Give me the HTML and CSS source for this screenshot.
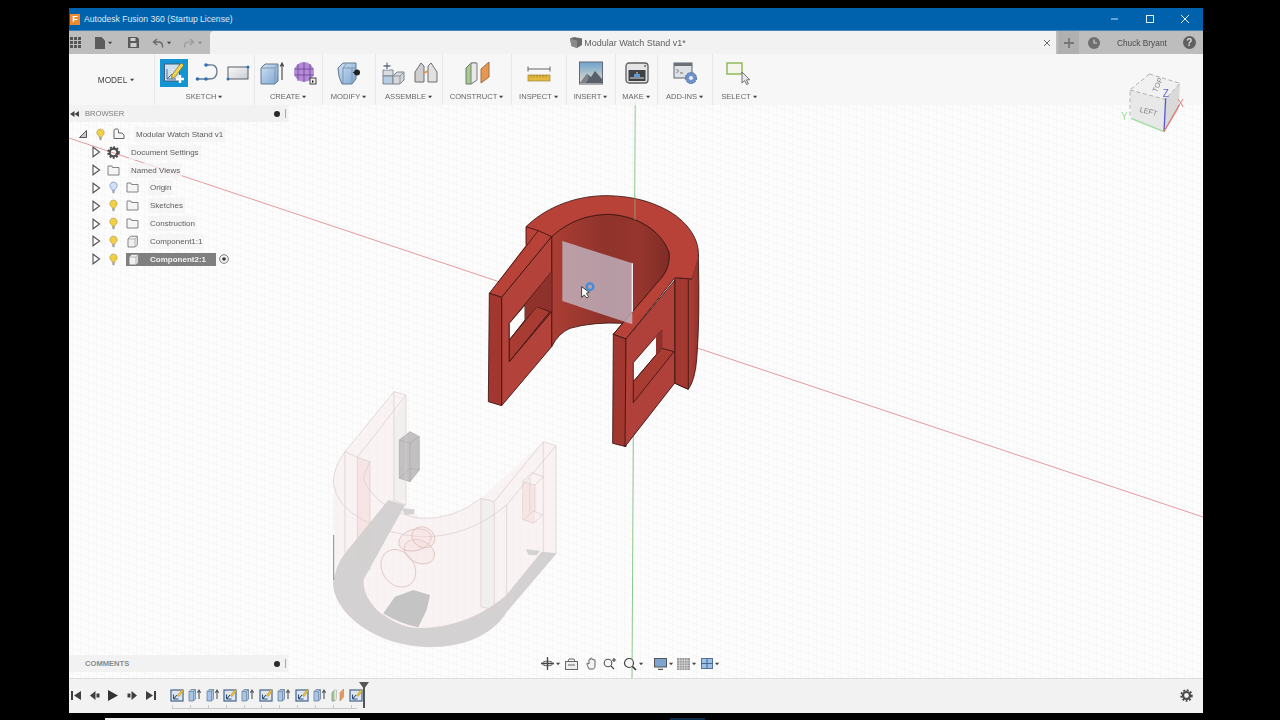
FILE: index.html
```html
<!DOCTYPE html>
<html lang="en">
<head>
<meta charset="utf-8">
<title>Autodesk Fusion 360</title>
<link rel="stylesheet" href="styles.css">
</head>
<body>
<svg class="defs" width="0" height="0" aria-hidden="true">
  <defs>
    <symbol id="bulb" viewBox="0 0 12 14"><path d="M6 1a4 4 0 0 0-2.400 7.200c.6.6.8 1.200.9 1.800h3c.1-.6.3-1.200.9-1.800A4 4 0 0 0 6 1z" fill="#f4cf45" stroke="#a89a55" stroke-width=".7"/><path d="M4.600 11h2.800M5 12.600h2" stroke="#777" stroke-width="1"/></symbol>
    <symbol id="bulb-off" viewBox="0 0 12 14"><path d="M6 1a4 4 0 0 0-2.400 7.200c.6.6.8 1.200.9 1.800h3c.1-.6.3-1.200.9-1.800A4 4 0 0 0 6 1z" fill="#cfe0f8" stroke="#6f8fc4" stroke-width=".8"/><path d="M4.600 11h2.800M5 12.600h2" stroke="#777" stroke-width="1"/></symbol>
    <symbol id="tri" viewBox="0 0 10 12"><path d="M2 1.200v9.600L8.600 6z" fill="#fafafa" stroke="#555" stroke-width="1.100"/></symbol>
    <symbol id="folder" viewBox="0 0 13 11"><path d="M1 2.500V10h11V2.500H5.500L5 1H1z" fill="#f5f5f5" stroke="#777" stroke-width=".9"/></symbol>
    <symbol id="comp" viewBox="0 0 12 13"><path d="M1.500 4L4 1.200h6.800V10L8.400 12H1.500z" fill="#f0f0f0" stroke="#777" stroke-width=".9"/><path d="M1.500 4h7v8M8.500 4l2.300-2.800" fill="none" stroke="#999" stroke-width=".7"/></symbol>
    <symbol id="sk" viewBox="0 0 14 14"><rect x="1" y="2" width="12" height="11" fill="#dfe6f0" stroke="#42648c" stroke-width="1.200"/><path d="M3.500 11L7 7M3.500 11h5M3.500 11V6.500" fill="none" stroke="#2f4f78" stroke-width="1.100"/><path d="M7.500 7.500L12 1.500l1.500 1.200-4.400 5.800z" fill="#f3c432" stroke="#9a8430" stroke-width=".5"/></symbol>
    <symbol id="ext" viewBox="0 0 14 14"><path d="M1 3.500L3 1.500h4.500V11L5.500 13H1z" fill="#a9c6e6" stroke="#6a829c" stroke-width=".8"/><path d="M1 3.500h4.500V13M5.500 3.500l2-2" fill="none" stroke="#6a829c" stroke-width=".7"/><path d="M11 11V3M9.300 4.700L11 2l1.700 2.700" fill="none" stroke="#555" stroke-width="1.100"/></symbol>
    <symbol id="con" viewBox="0 0 14 14"><path d="M1 5l2.500-3h2v8.500L3.500 13H1z" fill="#a4c98f" stroke="#777" stroke-width=".6"/><path d="M3.500 2h2v8.500l-2 2.500z" fill="#e9e9e9"/><path d="M9 10V4.500L12.500 1v8L9 13z" fill="#e69a5f" stroke="#a9764e" stroke-width=".5"/></symbol>
    <symbol id="caret" viewBox="0 0 6 4"><path d="M0 .5h5L2.500 3.500z" fill="#444"/></symbol>
    <pattern id="grid" width="8" height="8" patternUnits="userSpaceOnUse" patternTransform="skewY(18.400)"><path d="M8 0H0V8" fill="none" stroke="#eeeeef" stroke-width=".8"/></pattern>
    <linearGradient id="wall" x1="0" x2="1" y1="0" y2="0"><stop offset="0" stop-color="#ab3e34"/><stop offset=".45" stop-color="#8f332b"/><stop offset=".75" stop-color="#96352d"/><stop offset="1" stop-color="#7f2c26"/></linearGradient>
    <linearGradient id="side" x1="0" x2="1" y1="0" y2="0"><stop offset="0" stop-color="#b5443a"/><stop offset=".6" stop-color="#ad3e35"/><stop offset="1" stop-color="#93332c"/></linearGradient>
    <linearGradient id="plain" x1="0" x2="1" y1="0" y2="1"><stop offset="0" stop-color="#fbfbfb"/><stop offset="1" stop-color="#c9ccd2"/></linearGradient>
    <linearGradient id="blue" x1="0" x2="1" y1="0" y2="1"><stop offset="0" stop-color="#cfe0f2"/><stop offset="1" stop-color="#7ea7d4"/></linearGradient>
    <linearGradient id="sky" x1="0" x2="0" y1="0" y2="1"><stop offset="0" stop-color="#6ea4cf"/><stop offset="1" stop-color="#e9dcc8"/></linearGradient>
  </defs>
</svg>

<div class="app">
  <header class="titlebar">
    <span class="logo">F</span>
    <span class="title">Autodesk Fusion 360 (Startup License)</span>
    <div class="winctl">
      <svg width="10" height="10" viewBox="0 0 10 10"><path d="M1 5h7" stroke="#cfe2f2" stroke-width="1"/></svg>
      <svg width="10" height="10" viewBox="0 0 10 10"><rect x="1.500" y="1.500" width="7" height="7" fill="none" stroke="#e4eef7" stroke-width="1"/></svg>
      <svg width="10" height="10" viewBox="0 0 10 10"><path d="M1 1l8 8M9 1l-8 8" stroke="#eef4fa" stroke-width="1"/></svg>
    </div>
  </header>

  <div class="tabbar">
    <div class="quick">
      <svg class="q-grid" width="11" height="11" viewBox="0 0 11 11"><path d="M0 0h3v3H0zM4 0h3v3H4zM8 0h3v3H8zM0 4h3v3H0zM4 4h3v3H4zM8 4h3v3H8zM0 8h3v3H0zM4 8h3v3H4zM8 8h3v3H8z" fill="#555"/></svg>
      <svg class="q-file" width="10" height="12" viewBox="0 0 10 12"><path d="M0 0h6.500L10 3.500V12H0z" fill="#5c5c5c"/></svg>
      <svg class="q-caret" width="5" height="4"><use href="#caret"/></svg>
      <svg class="q-save" width="11" height="11" viewBox="0 0 11 11"><path d="M0 0h9l2 2v9H0z" fill="#5a5a5a"/><rect x="2.500" y="1" width="5" height="3" fill="#cfcfcf"/><rect x="2.500" y="6" width="6" height="4" fill="#cfcfcf"/></svg>
      <svg class="q-undo" width="12" height="10" viewBox="0 0 12 10"><path d="M5 1L1.500 4 5 7M2 4h5q4 .5 3.500 5.500" fill="none" stroke="#6a6a6a" stroke-width="1.400"/></svg>
      <svg class="q-caret" width="5" height="4"><use href="#caret"/></svg>
      <svg class="q-redo" width="12" height="10" viewBox="0 0 12 10"><path d="M7 1l3.500 3L7 7M10 4H5Q1 4.500 1.500 9.500" fill="none" stroke="#999" stroke-width="1.200"/></svg>
      <svg class="q-caret dim" width="5" height="4"><use href="#caret"/></svg>
    </div>
    <div class="doctab">
      <span class="doctab-name">
        <svg width="12" height="11" viewBox="0 0 12 11"><path d="M0 1.500L4 0l8 1.500V8L7 11 1.500 9z" fill="#6b6b6b"/><path d="M0 1.500L7 3.500V11L1.500 9z" fill="#8a8a8a"/></svg>
        Modular Watch Stand v1*
      </span>
      <svg class="doctab-x" width="8" height="8" viewBox="0 0 8 8"><path d="M1 1l6 6M7 1L1 7" stroke="#666" stroke-width="1"/></svg>
    </div>
    <div class="plus"><svg width="10" height="10" viewBox="0 0 10 10"><path d="M5 0v10M0 5h10" stroke="#777" stroke-width="1.800"/></svg></div>
    <svg class="clock" width="12" height="12" viewBox="0 0 12 12"><circle cx="6" cy="6" r="6" fill="#6f6f6f"/><path d="M6 2.500V6h3" fill="none" stroke="#d0d0d0" stroke-width="1.200"/></svg>
    <span class="user">Chuck Bryant</span>
    <span class="help">?</span>
  </div>

  <main class="workspace">
    <svg class="scene" viewBox="69 54 1134 624" preserveAspectRatio="none">
      <rect x="69" y="54" width="1134" height="624" fill="#fcfcfc"/>
      <rect x="69" y="54" width="1134" height="624" fill="url(#grid)"/>
      <path d="M69 138L1203 517" stroke="#e39a9e" stroke-width="1"/>
      <path d="M635.500 54L632 678" stroke="#8cc98c" stroke-width="1"/>

      <!-- ghost component -->
      <g transform="translate(320 380) scale(.3333)" stroke-linejoin="round">
        <path d="M222 35L258 45V375L300 415Q400 420 483 355L670 185L708 197V520L560 695C520 760 440 800 330 800C170 800 40 700 40 610V310Q40 260 75 215z" fill="#f7e9e9" fill-opacity=".45"/>
        <path d="M112 232L150 245V570L112 540z" fill="#f4d3d3" fill-opacity=".45"/>
        <path d="M222 120L258 45V360H222zM483 355L523 365V690L483 680z" fill="#ececec" fill-opacity=".5"/>
        <path d="M610 305L645 315V430L610 420z" fill="#f3d3d3" fill-opacity=".45"/>
        <path d="M205 360L255 375L130 600C125 650 175 700 190 705C230 735 265 745 300 745C380 745 470 720 555 650L665 515L710 520L560 695C520 760 440 800 330 800C170 800 40 700 40 610Q45 560 75 520z" fill="#d1cfcf" fill-opacity=".95"/>
        <path d="M190 700L225 650L280 630L330 645L320 690L295 742Q235 730 190 700z" fill="#c5c4c4"/>
        <path d="M245 385L285 388L282 402L255 405zM618 508L660 512L650 526L625 524z" fill="#cbcbcb" opacity=".8"/>
        <path d="M238 180L270 155L298 170V270L270 305L238 295z" fill="#c2c0c0" stroke="#aaa8a8" stroke-width="2"/>
        <path d="M238 180L270 190L298 170M270 190V305M238 295L270 265L298 270" fill="none" stroke="#aaa8a8" stroke-width="2"/>
        <g fill="none" stroke="#dccdcd" stroke-width="2.200">
          <path d="M222 35L258 45L112 232L75 215Q40 260 40 310Q50 380 130 420Q210 465 300 470Q440 475 560 375L708 197L670 185L523 365L483 355Q400 420 300 415Q180 395 130 300Q135 270 150 245L112 232"/>
          <path d="M222 35L75 215M112 232V540L150 570V245M222 35V360L258 375V45M222 360L150 440M483 355V680L523 690V365M560 375V695M670 185V515M708 197V520M75 215V520"/>
          <path d="M608 305L635 278L670 290L645 315L608 305V418L640 430L668 405L640 393L610 420M645 315V393M630 295V395"/>
          <path d="M40 600C40 700 170 800 330 800C440 800 520 760 560 695L708 520"/>
          <path d="M130 600C125 650 175 700 190 705C230 735 265 745 300 745C380 745 470 720 555 650"/>
        </g>
        <g fill="#f4d5d5" fill-opacity=".22" stroke="#dbbcb8" stroke-width="2.200">
          <ellipse cx="235" cy="565" rx="48" ry="60" transform="rotate(-35 235 565)" fill-opacity="0"/>
          <ellipse cx="298" cy="515" rx="48" ry="34" transform="rotate(25 298 515)"/>
          <ellipse cx="285" cy="480" rx="50" ry="32" transform="rotate(-15 285 480)"/>
          <ellipse cx="310" cy="472" rx="36" ry="30" transform="rotate(30 310 472)"/>
        </g>
        <path d="M41 465V600" stroke="#8d8d8d" stroke-width="3"/>
      </g>

      <!-- red body -->
      <g transform="translate(470 180) scale(.3333)" stroke="#3b1512" stroke-width="2.600" stroke-linejoin="round">
        <path d="M665 297L685 225Q690 420 680 540Q675 600 655 628L615 610V295z" fill="url(#side)"/>
        <path d="M245 170C300 120 360 103 420 103C500 108 575 150 598 220C600 260 585 285 560 310L430 463L460 430Q370 425 300 445Q265 460 245 500z" fill="url(#wall)"/>
        <path d="M168 140V195L58 340L95 352L245 170C300 120 360 103 420 103C500 108 575 150 598 220C600 260 585 285 560 310L430 463L468 477L615 293L665 297L685 230C690 170 640 110 570 80C510 52 450 47 400 47C300 50 220 90 168 140z" fill="#b84238" stroke="none"/>
        <path d="M205 152L245 170M205 152L58 340M168 140L205 152M168 140V195M58 340L95 352L245 170C300 120 360 103 420 103C500 108 575 150 598 220C600 260 585 285 560 310L430 463L468 477L615 293L665 297M685 230C690 170 640 110 570 80C510 52 450 47 400 47C300 50 220 90 168 140" fill="none"/>
        <path d="M58 340L95 352V677L55 665z" fill="#a2372f"/>
        <path d="M95 352L245 170V500L95 677z" fill="#b2423a"/>
        <path d="M118 430L245 275V395L118 545z" fill="#8e322b"/>
        <path d="M118 430L165 375V420L118 480z" fill="#fbfbfb"/>
        <path d="M118 545V480L200 380L240 395z" fill="#a83c33"/>
        <path d="M245 275V392L200 380L165 420V375z" fill="#8e322b" stroke="none"/>
        <path d="M430 463L468 477V800L428 790z" fill="#a2372f"/>
        <path d="M468 477L615 300V608L465 800z" fill="#b0403a"/>
        <path d="M490 548L575 450V505L490 605z" fill="#fbfbfb"/>
        <path d="M490 668V605L575 505L612 515z" fill="#a83c33"/>
        <path d="M558 470L575 450V505L558 525z" fill="#8e322b" stroke="none"/>
        <path d="M615 295V610L655 628V300" fill="#a23830"/>
        <path d="M277 183L487 250V433L277 363z" fill="#c6c3d2" fill-opacity=".72" stroke="none"/>
        <path d="M487 250V395" stroke="#f1f1f4" stroke-width="4"/>
        <path d="M495 47V120" stroke="#8cc98c" stroke-opacity=".6" stroke-width="3"/>
        <circle cx="360" cy="320" r="10" fill="none" stroke="#3d8fdc" stroke-width="7"/>
        <path d="M335 320V352L343 345L351 354L356 350L349 340L358 337z" fill="#fff" stroke="#222" stroke-width="2.500"/>
      </g>
    </svg>

    <!-- ribbon -->
    <nav class="ribbon">
      <div class="group g-model"><span class="model-label">MODEL <svg width="5" height="4"><use href="#caret"/></svg></span></div>
      <div class="group g-sketch">
        <div class="icons">
          <span class="active"><svg width="24" height="24" viewBox="0 0 24 24"><path d="M2.500 3h15v17h-15z" fill="#cfe0ee" stroke="#3b5e80"/><path d="M5 18L10 13M5 18h10M5 18V8" stroke="#4a6e92" fill="none"/><path d="M10 14L19 2l3 2-9 12-3.500 1.500z" fill="#f4d54c" stroke="#7a6a25" stroke-width=".7"/><path d="M18 14v8M14 18h8" stroke="#fff" stroke-width="2.400"/></svg></span>
          <svg width="24" height="22" viewBox="0 0 24 22"><path d="M2.500 17H14q8 0 8-7.500T14 3h-3" fill="none" stroke="#65798f" stroke-width="1.300"/><circle cx="2.500" cy="17" r="1.800" fill="#2e6fb8"/><circle cx="11" cy="17" r="1.800" fill="#2e6fb8"/><circle cx="11" cy="3" r="1.800" fill="#2e6fb8"/></svg>
          <svg width="24" height="18" viewBox="0 0 24 18"><rect x="2" y="3" width="20" height="12" fill="url(#plain)" stroke="#565f6b"/><circle cx="2" cy="15" r="1.500" fill="#2e6fb8"/><circle cx="22" cy="3" r="1.500" fill="#2e6fb8"/></svg>
        </div>
        <span class="label">SKETCH <svg width="5" height="4"><use href="#caret"/></svg></span>
      </div>
      <div class="group g-create">
        <div class="icons">
          <svg width="24" height="24" viewBox="0 0 24 24"><path d="M1 7l4-4h13v17l-3 3H1z" fill="url(#blue)" stroke="#60788f"/><path d="M1 7h14v16M15 7l3-4" fill="none" stroke="#7f97ae"/><path d="M22 19V3M20.300 5.500L22 2l1.700 3.500" fill="none" stroke="#444" stroke-width="1.100"/></svg>
          <svg width="24" height="24" viewBox="0 0 24 24"><circle cx="11" cy="11" r="10" fill="#b48ad8"/><path d="M1 8h20M1 14h20M5 3v17M11 1v20M17 3v17" stroke="#6f4b96" stroke-width=".9"/><rect x="17" y="17" width="6" height="6" fill="#eee" stroke="#444"/><path d="M19 19l2 1.500-2 1.500z" fill="#222"/></svg>
        </div>
        <span class="label">CREATE <svg width="5" height="4"><use href="#caret"/></svg></span>
      </div>
      <div class="group g-modify">
        <div class="icons">
          <svg width="25" height="24" viewBox="0 0 25 24"><path d="M1 7l5-5h13v16l-4 5H5q-4-7-4-16z" fill="url(#blue)" stroke="#60788f"/><path d="M6 7h13M6 7v15M6 7l4-5M15 7v16" stroke="#7f97ae" fill="none"/><path d="M16 11.500h6" stroke="#222" stroke-width="1"/><circle cx="20" cy="11.500" r="3" fill="#222"/></svg>
        </div>
        <span class="label">MODIFY <svg width="5" height="4"><use href="#caret"/></svg></span>
      </div>
      <div class="group g-assemble">
        <div class="icons">
          <svg width="24" height="24" viewBox="0 0 24 24"><path d="M2 9h10v6H2z" fill="#d9dde2" stroke="#7b8692"/><path d="M2 15h10v8H2z" fill="#b9cde2" stroke="#7b8692"/><path d="M12 15l4-4h7v8l-4 4h-7z" fill="#d5d7da" stroke="#7b8692"/><path d="M12 15h7v8M19 15l4-4" fill="none" stroke="#8b939c"/><path d="M6 1v8M2.500 5h7" stroke="#fff" stroke-width="3.500"/><path d="M6 1.500v7M2.500 5h7" stroke="#607080" stroke-width="1.300"/></svg>
          <svg width="24" height="24" viewBox="0 0 24 24"><path d="M1 21V11l6-9 3 3v16H6z" fill="#cfcfcf" stroke="#6f6f6f"/><path d="M23 21V11l-6-9-3 3v16h4z" fill="#e1e1e1" stroke="#6f6f6f"/><path d="M10 12l4-2" stroke="#e5913c" stroke-width="1.800"/></svg>
        </div>
        <span class="label">ASSEMBLE <svg width="5" height="4"><use href="#caret"/></svg></span>
      </div>
      <div class="group g-construct">
        <div class="icons">
          <svg width="25" height="24" viewBox="0 0 25 24"><path d="M1 7l5-5h5v17l-5 4H1z" fill="#a4cc90" stroke="#6d7b68"/><path d="M6 2h6v17l-6 4z" fill="#e8e8e8" stroke="#7c7c7c"/><path d="M16 18V8l8-7v15l-8 6z" fill="#e69553" stroke="#9c7049"/></svg>
        </div>
        <span class="label">CONSTRUCT <svg width="5" height="4"><use href="#caret"/></svg></span>
      </div>
      <div class="group g-inspect">
        <div class="icons">
          <svg width="24" height="24" viewBox="0 0 24 24"><path d="M1 8h22M1 5.500v5M23 5.500v5" stroke="#666" stroke-width="1" fill="none"/><rect x="1" y="14" width="22" height="6" fill="#e6b93e" stroke="#9c8336" stroke-width=".7"/><path d="M4 14v2.500M7 14v2.500M10 14v2.500M13 14v2.500M16 14v2.500M19 14v2.500" stroke="#7d6a2a" stroke-width=".6"/></svg>
        </div>
        <span class="label">INSPECT <svg width="5" height="4"><use href="#caret"/></svg></span>
      </div>
      <div class="group g-insert">
        <div class="icons">
          <svg width="24" height="24" viewBox="0 0 24 24"><rect x=".5" y="1" width="23" height="22" fill="url(#sky)" stroke="#667"/><path d="M1 22l7-9 4 3 4-6 7 8v4z" fill="#59606b"/><path d="M1 22l7-9 2 4-3 5z" fill="#7c838d"/></svg>
        </div>
        <span class="label">INSERT <svg width="5" height="4"><use href="#caret"/></svg></span>
      </div>
      <div class="group g-make">
        <div class="icons">
          <svg width="24" height="24" viewBox="0 0 24 24"><rect x="1" y="2" width="22" height="20" rx="3" fill="#e4e4e4" stroke="#5f5f5f" stroke-width="1.300"/><rect x="3.500" y="9" width="17" height="11" fill="#3f4148"/><path d="M9 16h6v-3H9z" fill="#5b9bd5"/><path d="M11 12.500h2l-1-2z" fill="#e7e7e7"/><circle cx="20" cy="5" r="1" fill="#666"/><path d="M5 17h14" stroke="#ddd" stroke-width="1"/></svg>
        </div>
        <span class="label">MAKE <svg width="5" height="4"><use href="#caret"/></svg></span>
      </div>
      <div class="group g-addins">
        <div class="icons">
          <svg width="25" height="24" viewBox="0 0 25 24"><rect x="1" y="2" width="18" height="15" fill="#dde0e5" stroke="#5e6670"/><rect x="1" y="2" width="18" height="3" fill="#6b7078"/><path d="M3.500 8l2 2-2 2M7 12h3" stroke="#555" fill="none" stroke-width=".8"/><circle cx="18" cy="17" r="5.500" fill="#6f93c9" stroke="#44638f" stroke-dasharray="2 1"/><circle cx="18" cy="17" r="2" fill="#e8eef8"/></svg>
        </div>
        <span class="label">ADD-INS <svg width="5" height="4"><use href="#caret"/></svg></span>
      </div>
      <div class="group g-select">
        <div class="icons">
          <svg width="27" height="24" viewBox="0 0 27 24"><rect x="1" y="2" width="15" height="11" fill="#f4f6ee" stroke="#8fbb5a" stroke-width="1.500"/><path d="M16 11v11l2.600-2.400 2 4 1.700-.9-1.900-3.800 3.400-.2z" fill="#e8e8e8" stroke="#555" stroke-width=".8"/></svg>
        </div>
        <span class="label">SELECT <svg width="5" height="4"><use href="#caret"/></svg></span>
      </div>
    </nav>

    <!-- browser -->
    <aside class="browser">
      <div class="panel-head">
        <svg class="rewind" width="9" height="6" viewBox="0 0 9 6"><path d="M4.500 0v6L0 3zM9 0v6L4.500 3z" fill="#444"/></svg><span class="panel-title">BROWSER</span>
        <span class="dot"></span><span class="pipe"></span>
      </div>
      <ul class="tree">
        <li class="row root"><svg class="t" width="10" height="10" viewBox="0 0 10 10"><path d="M8.500 1.500v7h-7z" fill="#c7c7c7" stroke="#555"/></svg><svg class="b" width="11" height="13"><use href="#bulb"/></svg><svg class="i" width="12" height="12" viewBox="0 0 12 12"><path d="M1 10.500V2.500q0-1.500 1.500-1.500h2q1 0 1 1.500V5h3.500L11 7v3.500z" fill="#f5f5f5" stroke="#666"/></svg><span class="text">Modular Watch Stand v1</span></li>
        <li class="row doc"><svg class="t" width="10" height="12"><use href="#tri"/></svg><svg class="i" width="13" height="13" viewBox="0 0 13 13"><circle cx="6.500" cy="6.500" r="3.800" fill="none" stroke="#4e4e4e" stroke-width="2.200"/><circle cx="6.500" cy="6.500" r="5.400" fill="none" stroke="#4e4e4e" stroke-width="1.800" stroke-dasharray="2 1.500"/></svg><span class="text">Document Settings</span></li>
        <li class="row doc"><svg class="t" width="10" height="12"><use href="#tri"/></svg><svg class="i" width="13" height="11"><use href="#folder"/></svg><span class="text">Named Views</span></li>
        <li class="row"><svg class="t" width="10" height="12"><use href="#tri"/></svg><svg class="b" width="11" height="13"><use href="#bulb-off"/></svg><svg class="i" width="13" height="11"><use href="#folder"/></svg><span class="text">Origin</span></li>
        <li class="row"><svg class="t" width="10" height="12"><use href="#tri"/></svg><svg class="b" width="11" height="13"><use href="#bulb"/></svg><svg class="i" width="13" height="11"><use href="#folder"/></svg><span class="text">Sketches</span></li>
        <li class="row"><svg class="t" width="10" height="12"><use href="#tri"/></svg><svg class="b" width="11" height="13"><use href="#bulb"/></svg><svg class="i" width="13" height="11"><use href="#folder"/></svg><span class="text">Construction</span></li>
        <li class="row"><svg class="t" width="10" height="12"><use href="#tri"/></svg><svg class="b" width="11" height="13"><use href="#bulb"/></svg><svg class="i" width="13" height="13"><use href="#comp"/></svg><span class="text">Component1:1</span></li>
        <li class="row selected"><svg class="t" width="10" height="12"><use href="#tri"/></svg><svg class="b" width="11" height="13"><use href="#bulb"/></svg><span class="sel-box"><svg width="13" height="13"><use href="#comp"/></svg><span class="text">Component2:1</span></span><svg class="radio" width="10" height="10" viewBox="0 0 10 10"><circle cx="5" cy="5" r="4.300" fill="#f7f7f7" stroke="#555" stroke-width=".8"/><circle cx="5" cy="5" r="1.800" fill="#333"/></svg></li>
      </ul>
    </aside>

    <!-- view cube -->
    <svg class="cube" width="70" height="75" viewBox="0 0 210 225">
      <path d="M30 90L88 42L180 70L175 150L132 215L33 175z" fill="#e8e8e8"/>
      <path d="M135 118L180 70L175 150L132 215z" fill="#d9d9d9"/>
      <path d="M30 90L88 42L180 70L135 118z" fill="#f1f1f1"/>
      <path d="M30 90L135 118L180 70M88 42L30 90V175M88 42L180 70" fill="none" stroke="#b0b0b0" stroke-width="3" stroke-dasharray="12 8"/>
      <text class="cube-text" x="0" y="0" transform="translate(110 98) rotate(-65)">TOP</text>
      <text class="cube-text" x="0" y="0" transform="translate(58 155) rotate(14)">LEFT</text>
      <path d="M137 115L132 215" stroke="#5a5ad0" stroke-width="4"/>
      <path d="M132 215L178 135" stroke="#dc7a78" stroke-width="4"/>
      <path d="M132 215L33 175" stroke="#9ade9a" stroke-width="4"/>
      <text class="axis z" x="128" y="112">Z</text>
      <text class="axis x" x="172" y="142">X</text>
      <text class="axis y" x="3" y="180">Y</text>
    </svg>

    <!-- comments -->
    <div class="comments panel-head">
      <span class="panel-title">COMMENTS</span>
      <span class="dot"></span><span class="pipe"></span>
    </div>

    <!-- nav bar -->
    <div class="navbar">
      <svg width="13" height="13" viewBox="0 0 13 13"><path d="M6.500 0v13M0 6.500h13" stroke="#444" stroke-width="1.300"/><ellipse cx="6.500" cy="6.500" rx="5" ry="2.300" fill="none" stroke="#555"/></svg>
      <svg class="c" width="5" height="4"><use href="#caret"/></svg>
      <svg class="n-look" width="13" height="12" viewBox="0 0 13 12"><rect x=".5" y="3.500" width="12" height="8" fill="#eee" stroke="#666"/><path d="M3 3.500L4 1h5l1 2.500M3 7h7" stroke="#666" fill="none"/></svg>
      <svg class="n-hand" width="13" height="13" viewBox="0 0 13 13"><path d="M3 12Q1 8 .8 6.500 1.500 5.500 3 7V2.500q1-1 1.500 0V1.500q1-1 1.500 0v1q1-1 1.500 0V3q1-.8 1.500 0v6q0 2-1.500 3z" fill="#f2f2f2" stroke="#555" stroke-width=".9"/></svg>
      <svg class="n-zoom" width="13" height="13" viewBox="0 0 13 13"><circle cx="5" cy="6" r="3.800" fill="#f7f7f7" stroke="#555" stroke-width="1.100"/><path d="M8 9l3 3M11 1v4M9 3h4" stroke="#444" stroke-width="1.100"/></svg>
      <svg class="n-fit" width="14" height="14" viewBox="0 0 14 14"><circle cx="6" cy="6" r="4.500" fill="#f7f7f7" stroke="#444" stroke-width="1.200"/><path d="M9.500 9.500L13 13" stroke="#333" stroke-width="1.600"/></svg>
      <svg class="c" width="5" height="4"><use href="#caret"/></svg>
      <svg class="n-disp" width="13" height="12" viewBox="0 0 13 12"><rect x=".5" y=".5" width="12" height="8.500" fill="#7da5cf" stroke="#555"/><path d="M4 11.500h5" stroke="#555" stroke-width="1.500"/></svg>
      <svg class="c" width="5" height="4"><use href="#caret"/></svg>
      <svg class="n-grid" width="13" height="12" viewBox="0 0 13 12"><rect width="13" height="12" fill="#9a9a9a"/><path d="M2.500 0v12M5 0v12M7.500 0v12M10 0v12M0 2.500h13M0 5h13M0 7.500h13M0 10h13" stroke="#e3e3e3" stroke-width=".6"/></svg>
      <svg class="c" width="5" height="4"><use href="#caret"/></svg>
      <svg class="n-view" width="12" height="11" viewBox="0 0 12 11"><rect x=".5" y=".5" width="11" height="10" fill="#9cc0e6" stroke="#53749c"/><path d="M6 0v11M0 5.500h12" stroke="#3f5e86" stroke-width=".9"/></svg>
      <svg class="c" width="5" height="4"><use href="#caret"/></svg>
    </div>
  </main>

  <footer class="timeline">
    <div class="playback">
      <svg width="10" height="9" viewBox="0 0 10 9"><path d="M0 0h2v9H0zM10 0v9L3 4.500z" fill="#3e3e3e"/></svg>
      <svg width="10" height="9" viewBox="0 0 10 9"><path d="M5.500 0v9L0 4.500zM6.500 2.500h3v4h-3z" fill="#3e3e3e"/></svg>
      <svg width="10" height="11" viewBox="0 0 10 11"><path d="M0 0l10 5.500L0 11z" fill="#333"/></svg>
      <svg width="10" height="9" viewBox="0 0 10 9"><path d="M4.500 0v9L10 4.500zM.5 2.500h3v4h-3z" fill="#3e3e3e"/></svg>
      <svg width="10" height="9" viewBox="0 0 10 9"><path d="M10 0H8v9h2zM0 0v9l7-4.500z" fill="#3e3e3e"/></svg>
    </div>
    <div class="track">
      <svg width="14" height="14"><use href="#sk"/></svg>
      <svg width="14" height="14"><use href="#ext"/></svg>
      <svg width="14" height="14"><use href="#ext"/></svg>
      <svg width="14" height="14"><use href="#sk"/></svg>
      <svg width="14" height="14"><use href="#ext"/></svg>
      <svg width="14" height="14"><use href="#sk"/></svg>
      <svg width="14" height="14"><use href="#ext"/></svg>
      <svg width="14" height="14"><use href="#sk"/></svg>
      <svg width="14" height="14"><use href="#ext"/></svg>
      <svg width="14" height="14"><use href="#con"/></svg>
      <svg width="14" height="14"><use href="#sk"/></svg>
      <span class="marker"></span>
    </div>
    <svg class="gear" width="13" height="13" viewBox="0 0 13 13"><circle cx="6.500" cy="6.500" r="3.500" fill="none" stroke="#4a4a4a" stroke-width="2.200"/><circle cx="6.500" cy="6.500" r="5.300" fill="none" stroke="#4a4a4a" stroke-width="1.800" stroke-dasharray="2 1.500"/></svg>
  </footer>
</div>
<div class="strip"><span class="strip-white"></span><span class="strip-blue"></span></div>
</body>
</html>
```

FILE: styles.css
```css
* { box-sizing: border-box; }
html, body { height: 100%; }
body {
  margin: 0;
  background: #000;
  padding: 8px 77px 0 69px;
  overflow: hidden;
  font-family: "Liberation Sans", Arial, sans-serif;
  position: relative;
}
.defs { position: absolute; }
svg { display: block; flex: none; }

.app {
  width: 1134px;
  height: 705px;
  display: flex;
  flex-direction: column;
  filter: blur(.35px);
}

/* title bar */
.titlebar {
  height: 23px;
  background: #0062ad;
  display: flex;
  align-items: center;
  color: #dfeaf4;
  font-size: 8.600px;
  border-bottom: 1px solid #3f86bd;
}
.logo {
  width: 10px;
  height: 11px;
  margin-left: 1px;
  background: #f08a2c;
  color: #fff;
  font: bold 9px/11px "Liberation Sans", sans-serif;
  text-align: center;
}
.title { margin-left: 4px; }
.winctl { margin-left: auto; display: flex; gap: 25px; padding-right: 13px; }

/* tab bar */
.tabbar {
  height: 23px;
  background: #bdbdbd;
  display: flex;
  align-items: center;
  font-size: 8.300px;
  color: #4d4d4d;
}
.quick { width: 141px; display: flex; align-items: center; height: 100%; padding-left: 1px; }
.q-file { margin-left: 14px; }
.q-caret { margin-left: 3px; }
.q-caret.dim { opacity: .4; }
.q-save { margin-left: 15px; }
.q-undo { margin-left: 13px; }
.q-redo { margin-left: 11px; }
.doctab {
  width: 846px;
  height: 100%;
  background: #f2f2f2;
  border-radius: 4px 0 0 0;
  display: flex;
  align-items: center;
  position: relative;
  justify-content: center;
  font-size: 9px;
  color: #5e5e5e;
  padding-right: 10px;
}
.doctab-name { display: flex; align-items: center; gap: 2px; }
.doctab-x { position: absolute; right: 5px; top: 8px; }
.plus {
  width: 21px;
  height: 100%;
  margin-left: 2px;
  background: #b0b0b0;
  display: flex;
  align-items: center;
  justify-content: center;
}
.clock { margin-left: 9px; }
.user { margin-left: 17px; color: #4a4a4a; }
.help {
  margin-left: 16px;
  width: 13px;
  height: 13px;
  border-radius: 50%;
  background: #5f5f5f;
  color: #ddd;
  font: bold 10px/13px "Liberation Sans", sans-serif;
  text-align: center;
}

/* workspace */
.workspace {
  position: relative;
  flex: 1;
  overflow: hidden;
  background: #fcfcfc;
}
.scene { position: absolute; inset: 0; width: 100%; height: 100%; }

.ribbon {
  position: relative;
  height: 51px;
  display: flex;
  background: rgba(246,246,246,.92);
}
.group {
  display: flex;
  flex-direction: column;
  align-items: center;
  justify-content: space-between;
  padding: 5px 0 4px;
  border-right: 1px solid #e8e8e8;
}
.g-model { width: 86px; justify-content: center; padding: 0 0 0 10px; }
.g-sketch { width: 100px; }
.g-create { width: 68px; }
.g-modify { width: 53px; }
.g-assemble { width: 67px; }
.g-construct { width: 69px; }
.g-inspect { width: 55px; }
.g-insert { width: 49px; }
.g-make { width: 42px; }
.g-addins { width: 55px; }
.g-select { width: 53px; border-right: 0; }
.icons { display: flex; align-items: center; gap: 9px; height: 28px; }
.g-sketch .icons { gap: 7px; }
.active {
  width: 28px;
  height: 28px;
  background: #1494d2;
  display: flex;
  align-items: center;
  justify-content: center;
}
.label, .model-label {
  display: flex;
  align-items: center;
  gap: 2px;
  font-size: 7.600px;
  color: #666;
}
.model-label { font-size: 8.300px; color: #444; gap: 3px; }

/* browser */
.browser {
  position: absolute;
  left: 0;
  top: 51px;
  width: 219px;
}
.panel-head {
  height: 17px;
  display: flex;
  align-items: center;
  background: #f2f2f2;
  padding-left: 1px;
  color: #7d7d7d;
  font-size: 7.600px;
}
.rewind { margin-right: 6px; }
.dot {
  width: 6px;
  height: 6px;
  border-radius: 50%;
  background: #2b2b2b;
  margin-left: auto;
}
.pipe { width: 1px; height: 9px; background: #aaa; margin: 0 2px 0 5px; }
.tree {
  list-style: none;
  margin: 3.500px 0 0;
  padding: 0;
  font-size: 8px;
  color: #5c5c5c;
}
.row {
  height: 17.850px;
  display: flex;
  align-items: center;
  padding-left: 22px;
}
.row .b { margin-left: 7px; }
.row .i { margin-left: 7px; }
.row .text { margin-left: 9px; background: rgba(244,244,244,.75); padding: 3px 2px; }
.row.root { padding-left: 9px; }
.row.root .text { margin-left: 9px; }
.row.doc .i { margin-left: 6px; }
.row.doc .text { margin-left: 9px; }
.sel-box {
  margin-left: 7px;
  display: flex;
  align-items: center;
  background: #808080;
  height: 13px;
  width: 90px;
  padding-left: 1px;
}
.sel-box .text {
  margin-left: 10px;
  background: none;
  color: #f2f2f2;
  font-weight: bold;
  padding: 0;
}
.radio { margin-left: 3px; }

/* overlays */
.cube { position: absolute; right: 13px; top: 6px; filter: blur(.4px); }
.cube-text { font: 22px "Liberation Sans", sans-serif; fill: #808080; }
.axis { font: 30px "Liberation Sans", sans-serif; }
.axis.z { fill: #6464dc; }
.axis.x { fill: #e27a7a; }
.axis.y { fill: #9ae09a; }

.comments {
  position: absolute;
  left: 0;
  bottom: 6px;
  width: 219px;
  padding-left: 16px;
  font-weight: bold;
  color: #8a8a8a;
}

.navbar {
  position: absolute;
  left: 472px;
  top: 603px;
  display: flex;
  align-items: center;
  height: 13px;
  gap: 0;
}
.navbar .c { margin-left: 2px; }
.n-look { margin-left: 4px; }
.n-hand { margin-left: 8px; }
.n-zoom { margin-left: 4px; }
.n-fit { margin-left: 7px; }
.n-disp { margin-left: 10px; }
.n-grid { margin-left: 3px; }
.n-view { margin-left: 4px; }

/* timeline */
.timeline {
  height: 35px;
  background: #f2f2f2;
  border-top: 1px solid #dcdcdc;
  display: flex;
  align-items: center;
  padding: 0 0 2px 1px;
}
.playback { display: flex; gap: 8.700px; align-items: center; padding-left: 1px; }
.track {
  margin-left: 14px;
  position: relative;
  display: flex;
  gap: 3.900px;
  align-items: center;
  padding-bottom: 1px;
}
.track::after {
  content: "";
  position: absolute;
  left: 2px;
  right: 8px;
  bottom: -2px;
  height: 3px;
  border-bottom: 1px solid #c9c9c9;
  background: repeating-linear-gradient(90deg, #c9c9c9 0 1px, transparent 1px 17.900px);
}
.marker {
  width: 2px;
  height: 24px;
  margin: 0 0 -2px -4px;
  background: #555;
  position: relative;
}
.marker::before {
  content: "";
  position: absolute;
  left: -4px;
  top: -2px;
  border: 5px solid transparent;
  border-top: 7px solid #555;
}
.gear { margin-left: auto; margin-right: 10px; }

.strip {
  position: absolute;
  left: 0;
  right: 0;
  bottom: 0;
  height: 2px;
}
.strip-white { position: absolute; left: 105px; width: 255px; height: 2px; background: #eee; }
.strip-blue { position: absolute; left: 670px; width: 35px; height: 2px; background: #0c2a4a; }
```
